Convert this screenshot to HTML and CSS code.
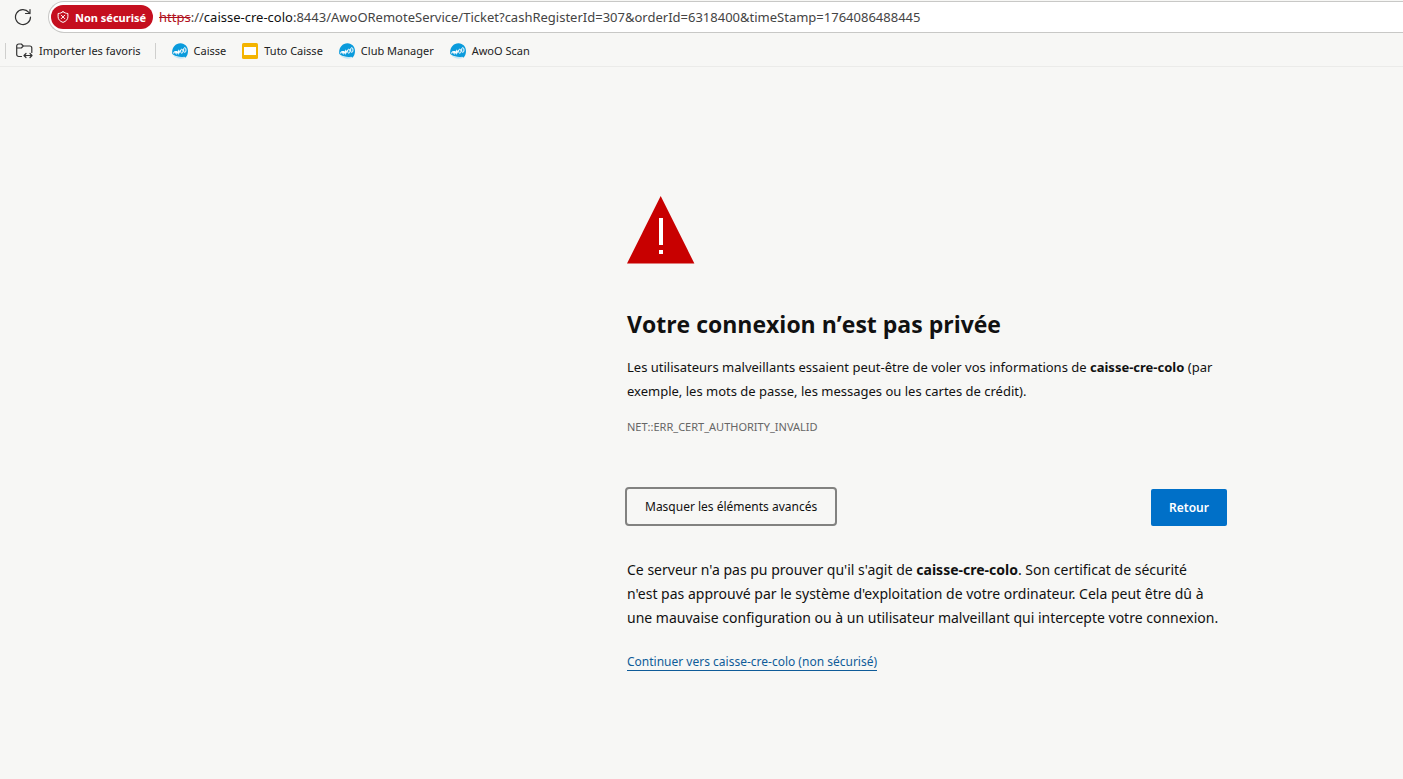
FILE: index.html
```html
<!DOCTYPE html>
<html lang="fr">
<head>
<meta charset="utf-8">
<title>Erreur de confidentialité</title>
<link rel="stylesheet" href="styles.css">
</head>
<body>
<svg class="defs" width="0" height="0" aria-hidden="true">
  <symbol id="awoo" viewBox="0 0 16 16">
    <path d="M.3 11C-.6 5.500 3 .3 8.500.3 13 .3 16 4 16 8c0 3-1 5.200-2.700 6.800l-1-1C8.500 14.300 4 14 .3 11z" fill="#0a9bdc"/>
    <path d="M1 12c3 2 6.500 2.300 11 2l1 1C9 16.300 4 16 1 12z" fill="#c5e6f5"/>
    <path d="M1.500 10.500c.6-1.800 2-2.400 2.300-1.500l-.3 1.500M4.500 8l.4 2.500L6.400 8l.3 2.300L8.500 7" fill="none" stroke="#fff" stroke-width="1.100"/>
    <ellipse cx="9.800" cy="8.200" rx="1.200" ry="2" fill="none" stroke="#fff"/>
    <ellipse cx="12.800" cy="7" rx="1.200" ry="2.400" fill="none" stroke="#fff"/>
  </symbol>
</svg>
<header class="browser">
  <div class="toolbar">
    <button class="reload" type="button" aria-label="Actualiser">
      <svg width="18" height="18" viewBox="0 0 18 18" fill="none" stroke="#333" stroke-width="1.200" stroke-linecap="round" stroke-linejoin="round"><path d="M16.500 9A7.500 7.500 0 1 1 14.800 4.300L16 5.500M16 1.500v4h-4.500"/></svg>
    </button>
    <div class="address">
      <button class="security" type="button">
        <svg width="12" height="12" viewBox="0 0 12 12" fill="none" stroke="#fff" stroke-linecap="round" stroke-linejoin="round"><path d="M6 .7C7.400 1.800 9 2.400 10.900 2.500v3.300c0 2.700-1.900 4.500-4.900 5.600C3 10.300 1.100 8.500 1.100 5.800V2.500C3 2.400 4.600 1.800 6 .7zM4.300 4.200l3.400 3.400M7.700 4.200L4.300 7.600"/></svg>
        <span>Non sécurisé</span>
      </button>
      <div class="url"><s>https</s>://<span class="host">caisse-cre-colo</span>:8443/AwoORemoteService/Ticket?cashRegisterId=307&amp;orderId=6318400&amp;timeStamp=1764086488445</div>
    </div>
  </div>
  <nav class="favorites">
    <button class="import" type="button">
      <svg width="17" height="16" viewBox="0 0 17 16" fill="none" stroke="#333" stroke-width="1.200" stroke-linecap="round" stroke-linejoin="round"><path d="M5.500 13.500H2.700A2 2 0 0 1 .7 11.500V3a2 2 0 0 1 2-2h2.600l2 2h6.500a2 2 0 0 1 2 2v4.500M.8 5h4.500l2-2M8 12.500h8M10 10.500l-2 2 2 2M14 10.500l2 2-2 2"/></svg>
      <span>Importer les favoris</span>
    </button>
    <a href="#"><svg width="16" height="16"><use href="#awoo"/></svg>Caisse</a>
    <a href="#"><svg width="16" height="16" viewBox="0 0 16 16"><rect width="16" height="16" rx="1.500" fill="#f4b400"/><path d="M2 4h12v8H2z" fill="#fff"/></svg>Tuto Caisse</a>
    <a href="#"><svg width="16" height="16"><use href="#awoo"/></svg>Club Manager</a>
    <a href="#"><svg width="16" height="16"><use href="#awoo"/></svg>AwoO Scan</a>
  </nav>
</header>
<main class="warning">
  <svg class="alert" width="68" height="68" viewBox="0 0 68 68"><path d="M33.700 0l33.700 67.500H0z" fill="#c80000"/><path d="M32 22h4v27h-4zM32 54h4v4h-4z" fill="#fff"/></svg>
  <h1>Votre connexion n’est pas privée</h1>
  <p class="summary">Les utilisateurs malveillants essaient peut-être de voler vos informations de <strong>caisse-cre-colo</strong> (par exemple, les mots de passe, les messages ou les cartes de crédit).</p>
  <p class="code">NET::ERR_CERT_AUTHORITY_INVALID</p>
  <div class="actions">
    <button class="details" type="button">Masquer les éléments avancés</button>
    <button class="back" type="button">Retour</button>
  </div>
  <p class="explain">Ce serveur n'a pas pu prouver qu'il s'agit de <strong>caisse-cre-colo</strong>. Son certificat de sécurité<br>n'est pas approuvé par le système d'exploitation de votre ordinateur. Cela peut être dû à<br>une mauvaise configuration ou à un utilisateur malveillant qui intercepte votre connexion.</p>
  <a class="proceed" href="#">Continuer vers caisse-cre-colo (non sécurisé)</a>
</main>
</body>
</html>
```
FILE: styles.css
```css
* { box-sizing: border-box; }
body {
  margin: 0;
  background: #f7f7f5;
  color: #111;
  font-family: "Noto Sans", "Open Sans", sans-serif;
}
button { font: inherit; color: inherit; border: 0; background: none; padding: 0; }
svg { flex: none; }
.defs { display: block; position: absolute; }
.browser { border-bottom: 1px solid #ebebe9; }
.toolbar { display: flex; align-items: center; padding-top: 1px; }
.reload { display: flex; margin: 0 16px 0 14px; }
.address {
  flex: 1;
  display: flex;
  align-items: center;
  gap: 6px;
  height: 32px;
  padding-left: 2px;
  background: #fff;
  border: 1px solid #c8c8c6;
  border-right: 0;
  border-radius: 16px 0 0 16px;
  white-space: nowrap;
  overflow: hidden;
}
.security {
  display: flex;
  align-items: center;
  gap: 6px;
  height: 24px;
  padding: 0 7px 0 6px;
  border-radius: 12px;
  background: #c50f1f;
  color: #fff;
  font-size: 11px;
  font-weight: 700;
}
.url { font-size: 13px; color: #444; }
.url s { color: #b01020; }
.host { color: #111; }
.favorites {
  display: flex;
  align-items: center;
  height: 33px;
  padding: 2px 0 0 5px;
  gap: 16px;
  font-size: 11px;
  color: #222;
}
.favorites a { display: flex; align-items: center; gap: 6px; color: inherit; text-decoration: none; white-space: nowrap; }
.import {
  display: flex;
  align-items: center;
  gap: 6px;
  height: 16px;
  padding: 0 14px 0 10px;
  border: solid #cfcfcd;
  border-width: 0 1px;
  white-space: nowrap;
}
.warning {
  max-width: 1227px;
  padding: 129px 0 40px 627px;
}
.alert { display: block; }
h1 { margin: 42px 0 0; font-family: "Open Sans", "Noto Sans", sans-serif; font-size: 23px; line-height: 36px; font-weight: 700; }
p { margin: 0; }
.summary { margin-top: 13px; font-size: 13px; line-height: 24px; }
.code { margin-top: 14px; font-size: 11px; line-height: 20px; color: #666; }
.actions { display: flex; justify-content: space-between; align-items: flex-end; margin: 50px 0 0 -2px; }
.details { height: 39px; padding: 0 18px; border: 2px solid #828280; border-radius: 4px; font-size: 12px; }
.back { height: 37px; padding: 0 18px; border-radius: 2px; background: #0070c8; color: #fff; font-size: 12px; font-weight: 600; }
.explain { margin-top: 32px; font-size: 14px; line-height: 24px; }
.proceed {
  display: inline-block;
  margin-top: 24px;
  border-bottom: 1px solid #0f5c99;
  color: #0f5c99;
  font-size: 12px;
  line-height: 16px;
  text-decoration: none;
}
```
